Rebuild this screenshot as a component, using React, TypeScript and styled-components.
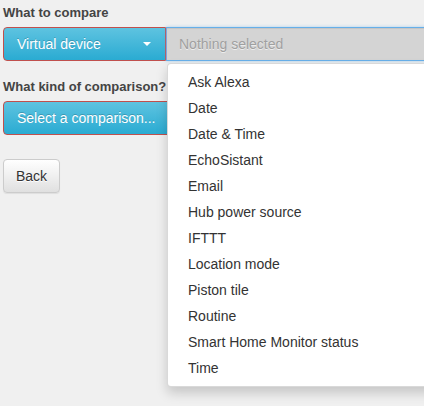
import React from 'react';
import styled, { createGlobalStyle } from 'styled-components';

const GlobalStyle = createGlobalStyle`
  html, body {
    margin: 0;
    padding: 0;
    background: #f0f0f0;
  }
  body {
    font-family: "Liberation Sans", Arial, sans-serif;
    font-size: 14px;
    color: #333;
  }
`;

const Page = styled.div`
  box-sizing: border-box;
  width: 100%;
  min-height: 406px;
  padding: 4px 3px;
  overflow: hidden;
`;

const FormGroup = styled.div<{ $gap?: number }>`
  margin-bottom: ${p => p.$gap ?? 17}px;
`;

const Label = styled.label`
  display: block;
  font-size: 13px;
  font-weight: bold;
  line-height: 18px;
  color: #444;
  margin-bottom: 5px;
  white-space: nowrap;
`;

const Row = styled.div`
  display: flex;
  position: relative;
  margin-right: -12px;
`;

const InfoButton = styled.button<{ $width: number }>`
  display: flex;
  align-items: center;
  justify-content: space-between;
  flex-shrink: 0;
  box-sizing: border-box;
  width: ${p => p.$width}px;
  height: 34px;
  padding: 0 13px;
  font-family: inherit;
  font-size: 14px;
  color: #fff;
  text-shadow: 0 -1px 0 rgba(0, 0, 0, 0.2);
  background: linear-gradient(to bottom, #5ec3e0 0%, #2aabd2 100%);
  border: 1px solid #c0504d;
  border-radius: 4px;
  cursor: pointer;
`;

const JoinedButton = styled(InfoButton)`
  border-top-right-radius: 0;
  border-bottom-right-radius: 0;
`;

const Caret = styled.span`
  width: 0;
  height: 0;
  border-left: 4px solid transparent;
  border-right: 4px solid transparent;
  border-top: 4px solid #fff;
  margin-right: 1px;
`;

const SelectBox = styled.div`
  position: relative;
  flex: 1;
  box-sizing: border-box;
  height: 34px;
  display: flex;
  align-items: center;
  padding: 0 12px;
  background: #d4d4d4;
  border: 1px solid #66afe9;
  border-left-color: #7fa6dd;
  box-shadow: inset 0 1px 1px rgba(0, 0, 0, 0.075), 0 0 3px rgba(102, 175, 233, 0.5);
  color: #a0a0a0;
  text-shadow: 0 1px 0 rgba(255, 255, 255, 0.6);
`;

const Menu = styled.ul`
  position: absolute;
  top: 100%;
  left: 0;
  margin: 3px 0 0;
  padding: 5px 0;
  list-style: none;
  width: 300px;
  background: #fff;
  border: 1px solid rgba(0, 0, 0, 0.15);
  border-radius: 4px;
  box-shadow: 0 6px 12px rgba(0, 0, 0, 0.175);
  z-index: 10;
`;

const MenuItem = styled.li`
  padding: 3px 20px;
  line-height: 20px;
  font-size: 14px;
  color: #333;
  text-shadow: none;
  white-space: nowrap;
`;

const DefaultButton = styled.button`
  box-sizing: border-box;
  height: 34px;
  padding: 0 12px;
  font-family: inherit;
  font-size: 14px;
  color: #333;
  text-shadow: 0 1px 0 #fff;
  background: linear-gradient(to bottom, #fff 0%, #e0e0e0 100%);
  border: 1px solid #ccc;
  border-radius: 4px;
  box-shadow: inset 0 1px 0 rgba(255, 255, 255, 0.15), 0 1px 1px rgba(0, 0, 0, 0.075);
  cursor: pointer;
`;

const options = [
  'Ask Alexa',
  'Date',
  'Date & Time',
  'EchoSistant',
  'Email',
  'Hub power source',
  'IFTTT',
  'Location mode',
  'Piston tile',
  'Routine',
  'Smart Home Monitor status',
  'Time',
];

const App: React.FC = () => (
  <>
    <GlobalStyle />
    <Page>
      <FormGroup>
        <Label>What to compare</Label>
        <Row>
          <JoinedButton $width={163}>
            Virtual device
            <Caret />
          </JoinedButton>
          <SelectBox>
            Nothing selected
            <Menu>
              {options.map(o => (
                <MenuItem key={o}>{o}</MenuItem>
              ))}
            </Menu>
          </SelectBox>
        </Row>
      </FormGroup>
      <FormGroup $gap={24}>
        <Label>What kind of comparison?</Label>
        <Row>
          <InfoButton $width={230}>Select a comparison...</InfoButton>
        </Row>
      </FormGroup>
      <DefaultButton>Back</DefaultButton>
    </Page>
  </>
);

export default App;
